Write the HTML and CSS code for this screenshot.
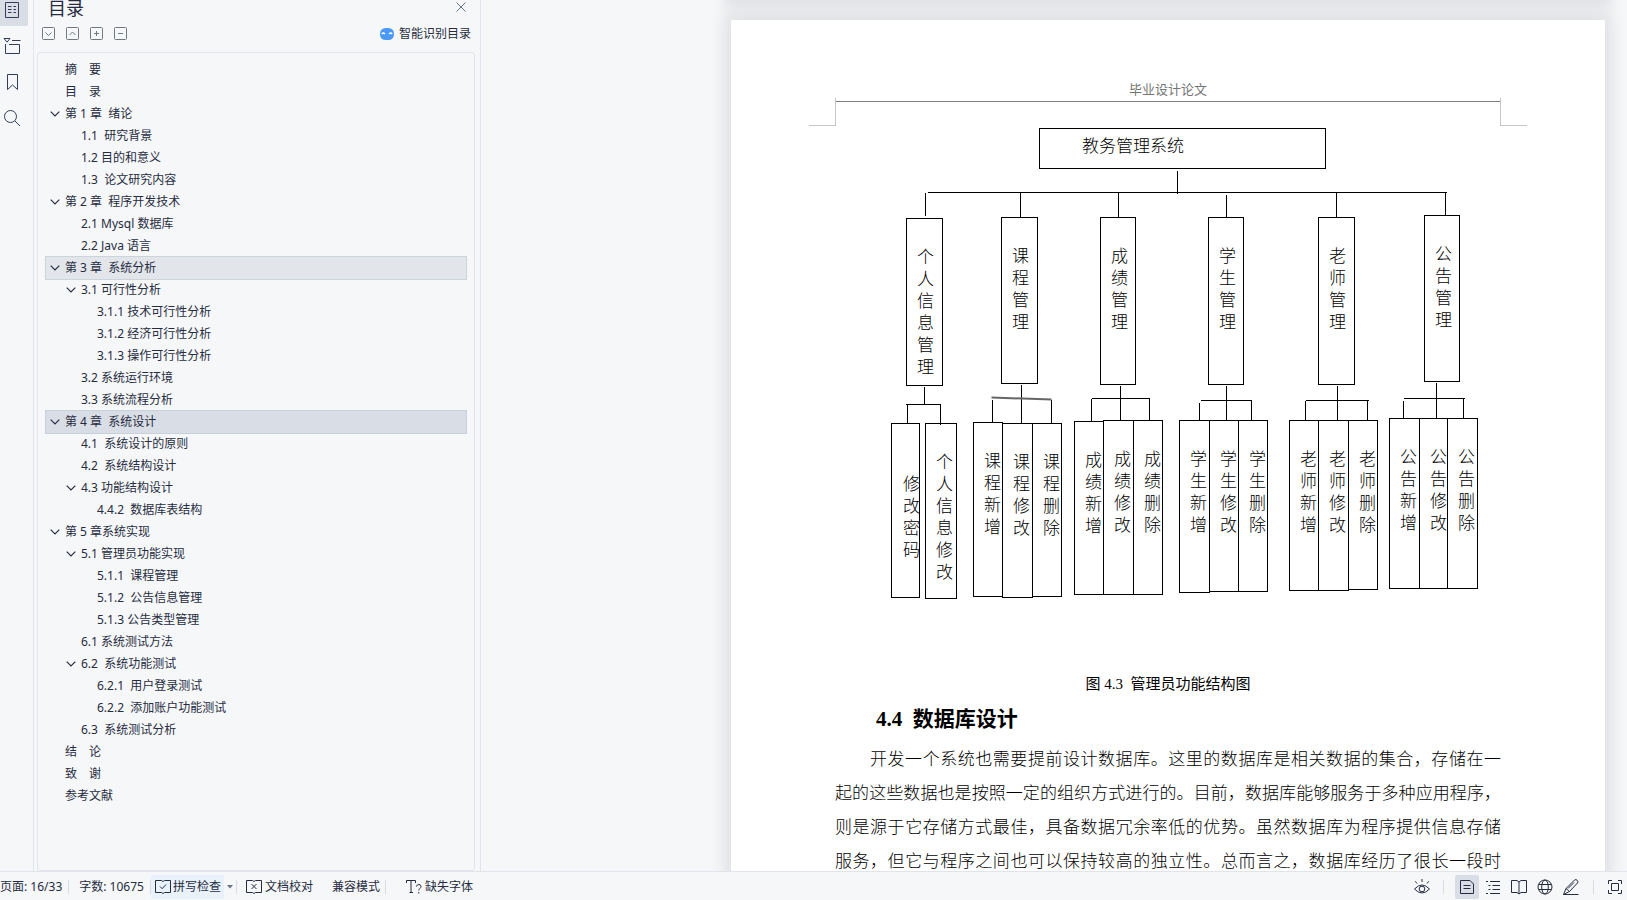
FILE: index.html
```html
<!DOCTYPE html>
<html lang="zh-CN">
<head>
<meta charset="utf-8">
<title>毕业设计论文</title>
<link rel="stylesheet" href="styles.css">
</head>
<body>
<svg class="defs" aria-hidden="true">
  <symbol id="chev" viewBox="0 0 10 6"><path d="M.7 .7 5 5 9.300 .7"/></symbol>
</svg>
<div class="workspace">
  <nav class="rail" aria-label="导航">
    <button class="rail-btn active" aria-label="目录"><svg width="16" height="18" viewBox="0 0 16 18"><path d="M1.500 1.500h13v15h-13zM4 5.500h3.500M9.500 5.500h2.500M4 8.500h3.500M9.500 8.500h2.500M4 11.500h3.500M9.500 11.500h2.500"/></svg></button>
    <button class="rail-btn" aria-label="章节"><svg width="18" height="18" viewBox="0 0 18 18"><path d="M1 1.500h6L4 5.200zM9 3.500h8.500M2.500 7v9.500h14v-9H6"/></svg></button>
    <button class="rail-btn" aria-label="书签"><svg width="14" height="18" viewBox="0 0 14 18"><path d="M2.500 1.500h10v15l-5-4.500-5 4.500z"/></svg></button>
    <button class="rail-btn" aria-label="查找"><svg width="18" height="18" viewBox="0 0 18 18"><circle cx="7.500" cy="7.500" r="6"/><path d="m12 12 5 5"/></svg></button>
  </nav>

  <aside class="panel">
    <header class="panel-head">
      <h1>目录</h1>
      <button class="close" aria-label="关闭"><svg width="10" height="10" viewBox="0 0 10 10"><path d="m.5.5 9 9M9.500.5l-9 9"/></svg></button>
    </header>
    <div class="tools">
      <button class="tool" aria-label="展开"><svg width="14" height="14" viewBox="0 0 14 14"><rect x=".5" y=".5" width="12" height="12" rx="1"/><path d="m3.500 5.500 3 3 3-3"/></svg></button>
      <button class="tool" aria-label="收起"><svg width="14" height="14" viewBox="0 0 14 14"><rect x=".5" y=".5" width="12" height="12" rx="1"/><path d="m3.500 8 3-3 3 3"/></svg></button>
      <button class="tool" aria-label="增加级别"><svg width="14" height="14" viewBox="0 0 14 14"><rect x=".5" y=".5" width="12" height="12" rx="1"/><path d="M4 6.500h5M6.500 4v5"/></svg></button>
      <button class="tool" aria-label="减少级别"><svg width="14" height="14" viewBox="0 0 14 14"><rect x=".5" y=".5" width="12" height="12" rx="1"/><path d="M4 6.500h5"/></svg></button>
      <button class="smart"><svg width="14" height="12" viewBox="0 0 14 12"><rect width="14" height="12" rx="5.500" fill="#4a9af5"/><path d="M1.800 6q1.500-2 3 0M9.200 6q1.500-2 3 0" fill="none" stroke="#fff" stroke-width="1.300"/></svg>智能识别目录</button>
    </div>
    <ul class="tree">
      <li class="row"><a href="#">摘　要</a></li>
      <li class="row"><a href="#">目　录</a></li>
      <li class="row"><button aria-label="折叠"><svg><use href="#chev"/></svg></button><a href="#">第 1 章  绪论</a></li>
      <li class="row l2"><a href="#">1.1  研究背景</a></li>
      <li class="row l2"><a href="#">1.2 目的和意义</a></li>
      <li class="row l2"><a href="#">1.3  论文研究内容</a></li>
      <li class="row"><button aria-label="折叠"><svg><use href="#chev"/></svg></button><a href="#">第 2 章  程序开发技术</a></li>
      <li class="row l2"><a href="#">2.1 Mysql 数据库</a></li>
      <li class="row l2"><a href="#">2.2 Java 语言</a></li>
      <li class="row hover"><button aria-label="折叠"><svg><use href="#chev"/></svg></button><a href="#">第 3 章  系统分析</a></li>
      <li class="row l2"><button aria-label="折叠"><svg><use href="#chev"/></svg></button><a href="#">3.1 可行性分析</a></li>
      <li class="row l3"><a href="#">3.1.1 技术可行性分析</a></li>
      <li class="row l3"><a href="#">3.1.2 经济可行性分析</a></li>
      <li class="row l3"><a href="#">3.1.3 操作可行性分析</a></li>
      <li class="row l2"><a href="#">3.2 系统运行环境</a></li>
      <li class="row l2"><a href="#">3.3 系统流程分析</a></li>
      <li class="row current"><button aria-label="折叠"><svg><use href="#chev"/></svg></button><a href="#">第 4 章  系统设计</a></li>
      <li class="row l2"><a href="#">4.1  系统设计的原则</a></li>
      <li class="row l2"><a href="#">4.2  系统结构设计</a></li>
      <li class="row l2"><button aria-label="折叠"><svg><use href="#chev"/></svg></button><a href="#">4.3 功能结构设计</a></li>
      <li class="row l3"><a href="#">4.4.2  数据库表结构</a></li>
      <li class="row"><button aria-label="折叠"><svg><use href="#chev"/></svg></button><a href="#">第 5 章系统实现</a></li>
      <li class="row l2"><button aria-label="折叠"><svg><use href="#chev"/></svg></button><a href="#">5.1 管理员功能实现</a></li>
      <li class="row l3"><a href="#">5.1.1  课程管理</a></li>
      <li class="row l3"><a href="#">5.1.2  公告信息管理</a></li>
      <li class="row l3"><a href="#">5.1.3 公告类型管理</a></li>
      <li class="row l2"><a href="#">6.1 系统测试方法</a></li>
      <li class="row l2"><button aria-label="折叠"><svg><use href="#chev"/></svg></button><a href="#">6.2  系统功能测试</a></li>
      <li class="row l3"><a href="#">6.2.1  用户登录测试</a></li>
      <li class="row l3"><a href="#">6.2.2  添加账户功能测试</a></li>
      <li class="row l2"><a href="#">6.3  系统测试分析</a></li>
      <li class="row"><a href="#">结　论</a></li>
      <li class="row"><a href="#">致　谢</a></li>
      <li class="row"><a href="#">参考文献</a></li>
    </ul>
  </aside>

  <main class="doc">
    <div class="sheet sheet-prev"></div>
    <article class="sheet">
      <div class="sheet-head">毕业设计论文</div>
      <figure>
        <div class="diagram" id="diagram">
          <svg class="wires" width="666" height="500" viewBox="835 125 666 500" aria-hidden="true">
            <g transform="translate(.5 .5)">
              <path d="M1177 170v23M927 192h519M925 192v23M1020 192v25M1118 192v25M1226 194v23M1336 192v25M1445 192v23"/>
              <path d="M924 386v18M905 404h35M907 404v19M940 404v20"/>
              <path d="M1021 384v39M992 399v23M1051 399v24"/>
              <path d="M1120 385v35M1091 398h58M1091 398v23M1149 398v22"/>
              <path d="M1226 385v34M1200 400h51M1199 402v18M1251 400v20"/>
              <path d="M1337 385v35M1305 400h63M1305 400v19M1367 400v20"/>
              <path d="M1436 382v36M1403 398h61M1403 400v17M1463 398v19"/>
              <path class="slant" d="m991 397 60 2"/>
            </g>
          </svg>
        </div>
        <figcaption>图 4.3  管理员功能结构图</figcaption>
      </figure>
      <h2>4.4  数据库设计</h2>
      <p>开发一个系统也需要提前设计数据库。这里的数据库是相关数据的集合，存储在一<br>起的这些数据也是按照一定的组织方式进行的。目前，数据库能够服务于多种应用程序，<br>则是源于它存储方式最佳，具备数据冗余率低的优势。虽然数据库为程序提供信息存储<br>服务，但它与程序之间也可以保持较高的独立性。总而言之，数据库经历了很长一段时</p>
    </article>
  </main>
</div>

<footer class="status">
  <span class="stat">页面: 16/33</span><i class="sep"></i>
  <span class="stat words">字数: 10675</span><i class="sep"></i>
  <button class="spell"><svg width="16" height="14" viewBox="0 0 16 14"><path d="M6.500 .5h-6v12h6M9.500 .5h6v12h-6M6.500 .5 8 1.500l1.500-1M6.500 12.500l1.500 1 1.500-1M5 6.500l2.200 2.200L11 4.500"/></svg>拼写检查</button>
  <button class="drop" aria-label="更多"><svg width="6" height="4" viewBox="0 0 6 4"><path d="M0 0h6L3 3.500z"/></svg></button><i class="sep"></i>
  <button class="proof"><svg width="16" height="14" viewBox="0 0 16 14"><path d="M6.500 .5h-6v12h6M9.500 .5h6v12h-6M6.500 .5 8 1.500l1.500-1M6.500 12.500l1.500 1 1.500-1M5.500 4l5 5M10.500 4l-5 5"/></svg>文档校对</button>
  <button class="compat">兼容模式</button><i class="sep"></i>
  <button class="fonts"><svg width="16" height="14" viewBox="0 0 16 14"><path d="M.5 3V.5h9V3M5 .5v12M3.500 12.500H7M10.500 6.500q.3-2 2.300-2 2.200 0 2.200 2 0 1.200-1.200 2-1 .8-1 2M12.800 12v1.500"/></svg>缺失字体</button>
  <div class="views">
    <button class="view eye" aria-label="护眼模式"><svg width="18" height="18" viewBox="0 0 18 18"><path d="M1.500 11Q9 3 16.500 11 9 19 1.500 11zM9 4V1M4 5.500 2.300 3.300M14 5.500l1.700-2.200"/><circle cx="9" cy="11" r="2.800"/></svg></button>
    <i class="sep"></i>
    <button class="view active" aria-label="页面视图"><svg width="16" height="16" viewBox="0 0 16 16"><path d="M1.500 1.500h9.500l3.500 3.500v9.500h-13zM4.500 6.500h7M4.500 9.500h7"/></svg></button>
    <button class="view" aria-label="大纲"><svg width="16" height="16" viewBox="0 0 16 16"><path d="M1 2.500h2M5 2.500h10M3.500 6.500h2M7.500 6.500H15M3.500 10.500h2M7.500 10.500H15M1 14.500h2M5 14.500h10"/></svg></button>
    <button class="view" aria-label="阅读版式"><svg width="16" height="16" viewBox="0 0 16 16"><path d="M.5 1.500H6l2 1.500 2-1.500h5.500v12H10L8 15l-2-1.500H.5zM8 3v12"/></svg></button>
    <button class="view" aria-label="Web 版式"><svg width="16" height="16" viewBox="0 0 16 16"><circle cx="8" cy="8" r="7"/><ellipse cx="8" cy="8" rx="3.300" ry="7"/><path d="M1.500 5.500h13M1.500 10.500h13"/></svg></button>
    <button class="view" aria-label="写作模式"><svg width="18" height="18" viewBox="0 0 18 18"><path d="M1.500 16.500 4 10.500 12.500 2q1.500-1 2.700.3 1.200 1.200.3 2.700L7.500 13.500l-6 3h15M4 10.500l3.500 3M6 10.500l6-6"/></svg></button>
    <i class="sep"></i>
    <button class="view" aria-label="全屏"><svg width="16" height="16" viewBox="0 0 16 16"><path d="M1.500 5V1.500H5M11 1.500h3.500V5M14.500 11v3.500H11M5 14.500H1.500V11M4.500 4.500h7v7h-7z"/></svg></button>
  </div>
</footer>
<script src="diagram.js"></script>
</body>
</html>
```
FILE: diagram.js
```js
// Nodes of the function chart: x, y, width, height, label, optional modifier.
const ORIGIN = { x: 835, y: 125 };
const NODES = [
  [1039, 128, 287, 41, '教务管理系统', 'root'],
  [906, 218, 37, 168, '个人信息管理'],
  [1001, 217, 37, 167, '课程管理'],
  [1100, 217, 36, 168, '成绩管理'],
  [1208, 217, 36, 168, '学生管理'],
  [1318, 217, 37, 168, '老师管理'],
  [1424, 215, 36, 167, '公告管理'],
  [891, 423, 29, 175, '修改密码', 'lowered'],
  [925, 423, 32, 176, '个人信息修改'],
  [973, 422, 30, 175, '课程新增'],
  [1002, 423, 31, 175, '课程修改'],
  [1032, 423, 30, 174, '课程删除'],
  [1074, 421, 30, 174, '成绩新增'],
  [1103, 420, 31, 175, '成绩修改'],
  [1133, 420, 30, 175, '成绩删除'],
  [1179, 420, 31, 173, '学生新增'],
  [1209, 420, 30, 172, '学生修改'],
  [1238, 420, 30, 172, '学生删除'],
  [1289, 420, 30, 171, '老师新增'],
  [1318, 420, 31, 171, '老师修改'],
  [1348, 420, 30, 170, '老师删除'],
  [1389, 418, 31, 171, '公告新增'],
  [1419, 418, 29, 171, '公告修改'],
  [1447, 418, 31, 171, '公告删除'],
];
const diagram = document.getElementById('diagram');
for (const [x, y, w, h, label, kind] of NODES) {
  const node = document.createElement('div');
  node.className = kind ? `node ${kind}` : 'node';
  node.textContent = label;
  node.style.left = `${x - ORIGIN.x}px`;
  node.style.top = `${y - ORIGIN.y}px`;
  node.style.width = `${w}px`;
  node.style.height = `${h}px`;
  diagram.append(node);
}
```
FILE: styles.css
```css
* { box-sizing: border-box; }
body {
  margin: 0;
  height: 100vh;
  display: flex;
  flex-direction: column;
  overflow: hidden;
  background: #f6f7f9;
  color: #262c40;
  font: 12px/22px "Noto Sans", "Noto Sans CJK SC", sans-serif;
}
button {
  display: flex;
  align-items: center;
  justify-content: center;
  padding: 0;
  border: 0;
  background: none;
  color: inherit;
  font: inherit;
  white-space: nowrap;
}
svg { flex: none; fill: none; stroke: currentColor; }
.defs { position: absolute; width: 0; height: 0; }

.workspace { flex: 1; min-height: 0; display: flex; }

.rail {
  flex: none;
  width: 34px;
  margin-top: -6px;
  display: flex;
  flex-direction: column;
  gap: 4px;
  border-right: 1px solid #e1e4ea;
}
.rail-btn {
  width: 28px;
  height: 32px;
  padding-right: 5px;
  color: #343d58;
}
.rail-btn.active { background: #d9dde5; border-radius: 0 0 2px 0; }

.panel {
  flex: none;
  width: 447px;
  display: flex;
  flex-direction: column;
  padding: 0 5px 0 3px;
  border-right: 1px solid #e1e4ea;
}
.panel-head {
  height: 16px;
  padding: 0 9px 0 11px;
  display: flex;
  align-items: center;
  justify-content: space-between;
}
.panel-head h1 { margin: 0; font-size: 18px; line-height: 16px; font-weight: 400; }
.close { height: 14px; align-self: flex-start; color: #66708f; }
.tools {
  height: 36px;
  padding: 0 4px 0 5px;
  display: flex;
  align-items: center;
  gap: 10px;
}
.tool { color: #73777f; }
.smart { margin-left: auto; gap: 5px; }
.smart svg { stroke: none; }

.tree {
  flex: 1;
  margin: 0;
  padding: 6px 8px 0;
  border: 1px solid #e1e4ea;
  border-radius: 3px;
  list-style: none;
}
.row {
  display: grid;
  grid-template-columns: 16px 1fr;
  align-items: center;
  height: 22px;
  padding-left: 3px;
}
.row a {
  grid-column: 2;
  color: inherit;
  text-decoration: none;
  white-space: pre;
}
.row button { grid-row: 1; justify-content: flex-start; padding-left: 1px; height: 22px; }
.row button svg { width: 10px; height: 6px; stroke-width: 1.2; }
.l2 { padding-left: 19px; }
.l3 { padding-left: 35px; }
.hover { background: #e2e5ea; box-shadow: 0 0 0 1px #cbd3db; }
.current { background: #d9dde5; box-shadow: 0 0 0 1px #c8d1d9; }

.doc {
  flex: 1;
  min-width: 0;
  overflow: hidden;
  display: flex;
  flex-direction: column;
  align-items: flex-end;
  gap: 20px;
  padding: 0 22px;
}
.sheet {
  flex: none;
  width: 100%;
  max-width: 874px;
  padding: 60px 104px 40px;
  background: #fff;
  box-shadow: 0 0 14px 7px rgba(40, 42, 46, .1);
  color: #000;
  font: 17px/34px "Liberation Serif", "Noto Sans CJK SC", serif;
}
.sheet-prev { height: 20px; margin-top: -20px; padding: 0; }
.sheet-head {
  position: relative;
  height: 22px;
  border-bottom: 1px solid #808080;
  color: #757575;
  font-size: 13px;
  line-height: 20px;
  text-align: center;
}
.sheet-head::before, .sheet-head::after {
  content: "";
  position: absolute;
  top: 18px;
  width: 26px;
  height: 27px;
  border: 0 solid #c6c6c6;
  border-bottom-width: 1px;
}
.sheet-head::before { right: calc(100% - 1px); border-right-width: 1px; }
.sheet-head::after { left: calc(100% - 1px); border-left-width: 1px; }

figure { margin: 23px 0 0; }
.diagram { position: relative; height: 547px; font-weight: 300; }
.wires { display: block; stroke: #000; shape-rendering: crispEdges; }
.slant { stroke: #666; stroke-width: 2; shape-rendering: auto; }
.node {
  position: absolute;
  padding: 28px 0 0 10px;
  border: 1px solid #000;
  line-height: 22px;
  word-break: break-all;
}
.node.root { padding: 7px 0 0 42px; }
.node.lowered { padding: 50px 0 0 11px; overflow: hidden; }
figcaption {
  font-size: 15px;
  line-height: 24px;
  text-align: center;
  white-space: pre;
}
h2 {
  margin: 0;
  padding-left: 41px;
  font-size: 21px;
  line-height: 46px;
  font-weight: 700;
  white-space: pre;
}
p {
  margin: 0;
  padding-top: 1px;
  font-weight: 300;
  text-indent: 35px;
  text-align: justify;
  text-align-last: justify;
}

.status {
  flex: none;
  height: 29px;
  display: flex;
  align-items: center;
  padding-top: 1px;
  border-top: 1px solid #e1e4ea;
  background: #f6f7f9;
  white-space: nowrap;
}
.sep { flex: none; width: 1px; height: 14px; background: #d9dce2; }
.stat { padding-right: 6px; }
.stat.words { padding: 0 6px 0 10px; }
.spell { gap: 2px; height: 24px; padding: 0 3px 0 4px; background: #e9f1fb; }
.drop { width: 12px; }
.drop svg { fill: #6b7285; stroke: none; }
.proof { gap: 3px; padding: 0 19px 0 9px; }
.compat { padding-right: 5px; }
.fonts { gap: 3px; padding-left: 20px; }
.views { margin-left: auto; display: flex; align-items: center; gap: 2px; }
.view { width: 24px; height: 24px; border-radius: 2px; }
.view.active { background: #d9dde5; }
.views .sep { margin: 0 7px 0 8px; }
.eye + .sep { margin: 0 9px 0 7px; }
```
